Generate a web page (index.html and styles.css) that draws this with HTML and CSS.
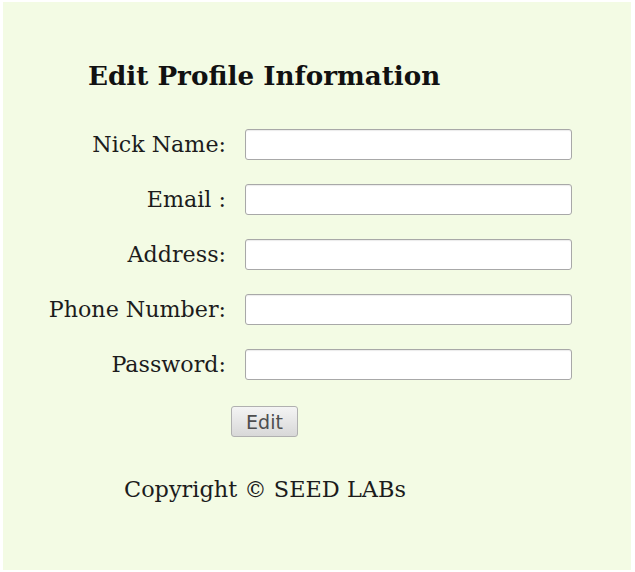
FILE: index.html
```html
<!DOCTYPE html>
<html>
<head>
<meta charset="utf-8">
<link rel="stylesheet" href="styles.css">
</head>
<body>
<div class="page">
  <h2 class="title">Edit Profile Information</h2>
  <form class="form">
    <label class="lbl">Nick Name:</label><input class="field" type="text">
    <label class="lbl">Email :</label><input class="field" type="text">
    <label class="lbl">Address:</label><input class="field" type="text">
    <label class="lbl">Phone Number:</label><input class="field" type="text">
    <label class="lbl">Password:</label><input class="field" type="password">
    <span></span><div class="actions"><button class="btn" type="button">Edit</button></div>
  </form>
  <p class="copy">Copyright © SEED LABs</p>
</div>
</body>
</html>
```
FILE: styles.css
```css
html, body {
  margin: 0;
  padding: 0;
  background: #ffffff;
}
body {
  padding: 2px 4px 2px 3px;
  font-family: "DejaVu Serif", serif;
  color: #1c1c1c;
}
.page {
  background: #f3fbe4;
  height: 568px;
  box-sizing: border-box;
  padding: 59px 0 0 47px;
}
.title {
  margin: 0 0 0 38px;
  font-size: 26.2px;
  font-weight: bold;
  line-height: 30px;
  color: #111;
}
.form {
  margin-top: 38px;
  display: grid;
  grid-template-columns: 176px 327px;
  column-gap: 19px;
  row-gap: 24px;
  align-items: center;
}
.lbl {
  justify-self: end;
  text-align: right;
  font-size: 22.2px;
  line-height: 26px;
  padding-bottom: 2px;
  white-space: nowrap;
}
.field {
  box-sizing: border-box;
  width: 327px;
  height: 31px;
  margin: 0;
  border: 1px solid #a8a8a8;
  border-radius: 3px;
  background: #fff;
  box-shadow: inset 0 1px 1px rgba(0,0,0,0.08);
}
.actions {
  margin-left: -14px;
  padding-top: 2px;
}
.btn {
  font-family: "DejaVu Sans", sans-serif;
  font-size: 19px;
  color: #4e4e4e;
  height: 31px;
  width: 67px;
  border: 1px solid #b0b0b0;
  border-radius: 3px;
  background: linear-gradient(#f4f4f4, #d8d8d8);
  padding: 0;
}
.copy {
  margin: 39px 0 0 74px;
  font-size: 22.4px;
  line-height: 26px;
}
```
